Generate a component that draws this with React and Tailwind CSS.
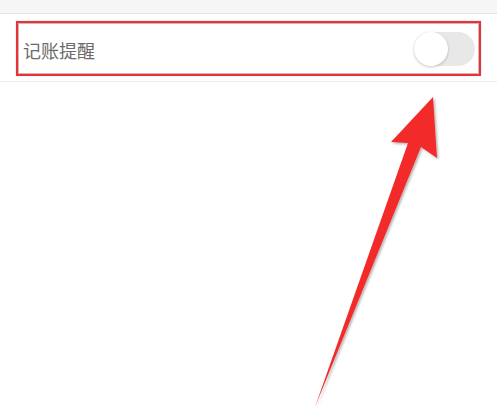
import React from 'react';

function Toggle() {
  return (
    <div className="relative w-[61px] h-[34px] rounded-full bg-[#e8e8e8]">
      <div className="absolute left-0 top-0 w-[34px] h-[34px] rounded-full bg-white shadow-[0_1px_3px_rgba(0,0,0,0.22)]" />
    </div>
  );
}

function Arrow() {
  return (
    <svg
      className="absolute left-0 top-0 pointer-events-none"
      width="497"
      height="414"
      viewBox="0 0 497 414"
    >
      <defs>
        <filter id="sh" x="-20%" y="-20%" width="140%" height="140%">
          <feDropShadow dx="1.5" dy="1.5" stdDeviation="1" floodColor="#000" floodOpacity="0.3" />
        </filter>
      </defs>
      <polygon
        points="433,97 437,158 421,147 315,407 408,143 391,142"
        fill="#f22b2b"
        filter="url(#sh)"
      />
    </svg>
  );
}

export default function App() {
  return (
    <div className="relative w-[497px] h-[414px] overflow-hidden bg-white font-['Noto_Sans_CJK_SC','Noto_Sans',sans-serif]">
      <div className="h-[14px] bg-[#f6f6f6] border-b border-[#e2e2e2]" />
      <div className="px-[16px] pt-[7px] pb-[5px] border-b border-[#ececec] bg-white">
        <div className="h-[55px] flex items-center justify-between pl-[5px] pr-[4px] border-2 border-[#e53437] shadow-[inset_0_0_0_1px_#d6b4b4,0_0_1px_rgba(0,0,0,0.3)]">
          <span className="mt-[3px] text-[18px] leading-none text-[#6b6b6b]">记账提醒</span>
          <Toggle />
        </div>
      </div>
      <Arrow />
    </div>
  );
}
